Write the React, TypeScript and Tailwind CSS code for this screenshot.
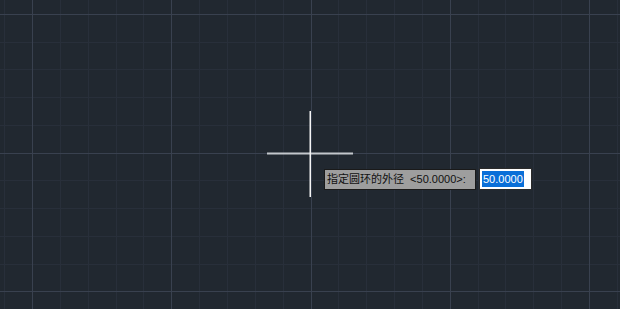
const W = 620;
const H = 309;
const STEP_X = 27.85;
const STEP_Y = 27.74;
const X0 = 32;
const Y0 = 14;

function Grid() {
  const xs: { v: number; major: boolean }[] = [];
  for (let i = -2; X0 + i * STEP_X < W; i++) {
    const v = X0 + i * STEP_X;
    if (v >= 0) xs.push({ v: Math.round(v) + 0.5, major: ((i % 5) + 5) % 5 === 0 });
  }
  const ys: { v: number; major: boolean }[] = [];
  for (let i = -1; Y0 + i * STEP_Y < H; i++) {
    const v = Y0 + i * STEP_Y;
    if (v >= 0) ys.push({ v: Math.round(v) + 0.5, major: ((i % 5) + 5) % 5 === 0 });
  }
  return (
    <svg width={W} height={H} className="absolute inset-0">
      {xs.filter((l) => !l.major).map((l) => (
        <line key={'vx' + l.v} x1={l.v} y1={0} x2={l.v} y2={H} stroke="#282f3a" strokeWidth={1} />
      ))}
      {ys.filter((l) => !l.major).map((l) => (
        <line key={'hy' + l.v} x1={0} y1={l.v} x2={W} y2={l.v} stroke="#282f3a" strokeWidth={1} />
      ))}
      {xs.filter((l) => l.major).map((l) => (
        <line key={'Vx' + l.v} x1={l.v} y1={0} x2={l.v} y2={H} stroke="#39414f" strokeWidth={1} />
      ))}
      {ys.filter((l) => l.major).map((l) => (
        <line key={'Hy' + l.v} x1={0} y1={l.v} x2={W} y2={l.v} stroke="#39414f" strokeWidth={1} />
      ))}
      {/* crosshair */}
      <rect x={267} y={152.5} width={86} height={2} fill="#c3c7cc" />
      <rect x={309.5} y={111} width={1.5} height={86} fill="#f4f4f4" />
    </svg>
  );
}

export default function App() {
  return (
    <div className="relative w-[620px] h-[309px] overflow-hidden bg-[#212830] font-['Liberation_Sans','Noto_Sans_CJK_SC',sans-serif]">
      <Grid />

      {/* dynamic input prompt */}
      <div className="absolute left-[324px] top-[169px] flex items-start gap-[3px]">
        <div className="h-[21px] w-[152px] border border-[#1a1a1a] bg-[#9e9e9e] pl-[2px] text-[11px] leading-[19px] text-[#111] whitespace-pre">
          指定圆环的外径  &lt;50.0000&gt;:
        </div>
        <div className="-mt-[1px] flex h-[22px] w-[53px] items-center border border-[#2b2b2b] bg-white pl-[2px]">
          <span className="bg-[#0a6fd8] px-[1px] text-[11px] leading-[16px] text-white">50.0000</span>
        </div>
      </div>
    </div>
  );
}
